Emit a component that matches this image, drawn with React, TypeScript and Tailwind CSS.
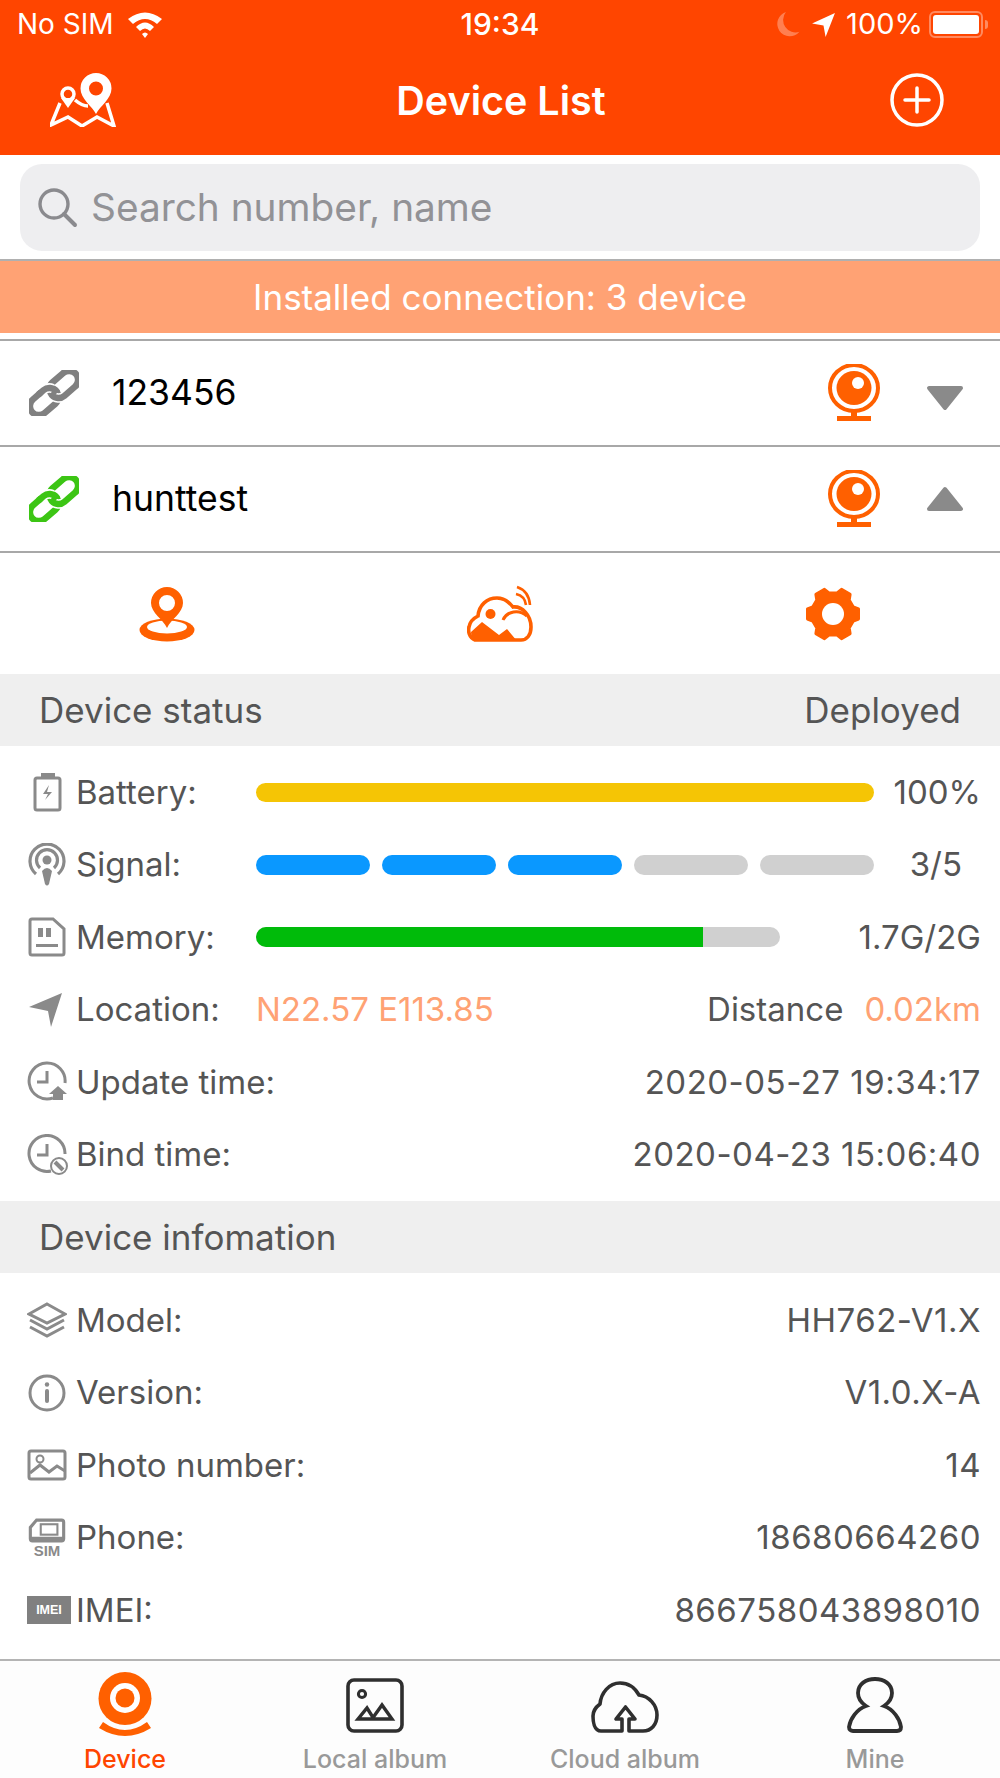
import type { ReactNode } from "react";

const font = { fontFamily: "Inter, 'Liberation Sans', sans-serif" };

const Gray = "#8a8a8a";
const Orange = "#ff6000";

const Svg = ({ w, h, vb, children }: { w: number; h: number; vb: string; children: ReactNode }) => (
  <svg width={w} height={h} viewBox={vb} className="block shrink-0">
    {children}
  </svg>
);

const LinkIcon = ({ color }: { color: string }) => (
  <Svg w={50} h={46} vb="0 0 50 46">
    <g fill="none" strokeWidth="6.5" transform="rotate(-41 25 23)">
      <rect x="-4" y="14" width="32" height="18" rx="9" stroke={color} />
      <rect x="22" y="14" width="32" height="18" rx="9" stroke="#fff" strokeWidth="9.5" />
      <rect x="22" y="14" width="32" height="18" rx="9" stroke={color} />
      <path d="M16 14 H19 A9 9 0 0 1 27 19" stroke="#fff" strokeWidth="9.5" />
      <path d="M12 14 H19 A9 9 0 0 1 28 23 V25" stroke={color} />
    </g>
  </Svg>
);

const Webcam = () => (
  <Svg w={52} h={58} vb="0 0 52 58">
    <ellipse cx="26" cy="24" rx="24" ry="23" fill="none" stroke={Orange} strokeWidth="4" />
    <ellipse cx="26" cy="24" rx="17.5" ry="17" fill={Orange} />
    <circle cx="30" cy="19" r="6" fill="#fff" />
    <rect x="23" y="46" width="6" height="8" fill={Orange} />
    <rect x="9" y="52" width="34" height="5" fill={Orange} />
  </Svg>
);

const DeviceRow = ({ name, color, up }: { name: string; color: string; up?: boolean }) => (
  <div className="flex h-[106px] items-center border-b-2 border-[#a8a8a8] pl-[29px] pr-[36px]">
    <LinkIcon color={color} />
    <span className="ml-[33px] flex-1 text-[35.5px] text-black">{name}</span>
    <Webcam />
    <div className={up ? "ml-[46px]" : "ml-[46px] mt-[10px]"}>
      <Svg w={38} h={26} vb="0 0 38 26">
        <path
          d={up ? "M19 3 L35 23 H3 Z" : "M3 3 H35 L19 23 Z"}
          fill={Gray}
          stroke={Gray}
          strokeWidth="4"
          strokeLinejoin="round"
        />
      </Svg>
    </div>
  </div>
);

const Row = ({ icon, label, children }: { icon: ReactNode; label: string; children?: ReactNode }) => (
  <div className="flex h-[72.5px] items-center pl-[27px] pr-[19px] text-[33px] text-[#555555]">
    <div className="flex w-[49px] shrink-0 items-center">{icon}</div>
    <span className="min-w-[180px]">{label}</span>
    {children}
  </div>
);

const Value = ({ children }: { children: ReactNode }) => <span className="ml-auto tracking-[0.5px]">{children}</span>;

const SectionHead = ({ left, right }: { left: string; right?: string }) => (
  <div className="flex h-[72px] items-center justify-between bg-[#efefef] pl-[39px] pr-[39px] text-[35px] text-[#555555]">
    <span>{left}</span>
    {right && <span>{right}</span>}
  </div>
);

const stroke = { fill: "none", stroke: Gray, strokeWidth: 3 };

const icons = {
  battery: (
    <Svg w={40} h={40} vb="0 0 40 40">
      <rect x="14" y="1" width="14" height="5" fill={Gray} />
      <rect x="8" y="6" width="25" height="32" rx="2" {...stroke} />
      <path d="M22 13 L16 22 H21 L18 28 L25 20 H20 Z" fill={Gray} />
    </Svg>
  ),
  signal: (
    <Svg w={40} h={44} vb="0 0 40 44">
      <path d="M9 31 A17 17 0 1 1 31 31" {...stroke} strokeWidth="3.2" />
      <path d="M13 25 A10.5 10.5 0 1 1 27 25" {...stroke} strokeWidth="3.2" />
      <circle cx="20" cy="17" r="4.5" fill={Gray} />
      <path d="M15 28 Q20 22 25 28 L22 41 Q20 44 18 41 Z" fill={Gray} />
    </Svg>
  ),
  memory: (
    <Svg w={40} h={40} vb="0 0 40 40">
      <path d="M5 2 H26 L37 12 V36 Q37 38 35 38 H5 Q3 38 3 36 V4 Q3 2 5 2 Z" {...stroke} />
      <rect x="11" y="11" width="5" height="9" fill={Gray} />
      <rect x="19" y="11" width="5" height="9" fill={Gray} />
      <rect x="9" y="27" width="22" height="3" fill={Gray} />
    </Svg>
  ),
  location: (
    <Svg w={40} h={36} vb="0 0 40 36">
      <path d="M35 1 L2 15 L21 19 L24 35 Z" fill={Gray} />
    </Svg>
  ),
  update: (
    <Svg w={42} h={42} vb="0 0 42 42">
      <path d="M26 37 A18 18 0 1 1 38 22" {...stroke} />
      <path d="M20 10 V21 H10" {...stroke} />
      <path d="M31 25 L40 33 H36 V39 H26 V33 H22 Z" fill={Gray} />
    </Svg>
  ),
  bind: (
    <Svg w={42} h={42} vb="0 0 42 42">
      <path d="M24 37 A18 18 0 1 1 38 20" {...stroke} />
      <path d="M20 10 V21 H10" {...stroke} />
      <circle cx="32" cy="32" r="8" {...stroke} strokeWidth="2" />
      <path d="M28 28 L36 36" stroke={Gray} strokeWidth="4" />
    </Svg>
  ),
  model: (
    <Svg w={40} h={36} vb="0 0 40 36">
      <path d="M20 2 L38 12 L20 21 L2 12 Z" {...stroke} />
      <path d="M3 18 L20 27 L37 18" {...stroke} />
      <path d="M3 25 L20 34 L37 25" {...stroke} />
    </Svg>
  ),
  version: (
    <Svg w={40} h={38} vb="0 0 40 38">
      <circle cx="20" cy="19" r="17" {...stroke} />
      <circle cx="20" cy="10.5" r="2.2" fill={Gray} />
      <rect x="18" y="15" width="4" height="14" rx="2" fill={Gray} />
    </Svg>
  ),
  photo: (
    <Svg w={40} h={32} vb="0 0 40 32">
      <rect x="2" y="2" width="36" height="28" rx="2" {...stroke} />
      <circle cx="13" cy="10" r="3.5" {...stroke} strokeWidth="2" />
      <path d="M3 24 L13 16 L22 23 L30 17 L38 22" {...stroke} />
    </Svg>
  ),
  phone: (
    <div className="flex w-[40px] flex-col items-center">
      <Svg w={38} h={25} vb="0 0 36 24">
        <path d="M8 2 H32 Q34 2 34 4 V20 Q34 22 32 22 H4 Q2 22 2 20 V9 Z" {...stroke} />
        <rect x="12" y="6" width="16" height="10" {...stroke} strokeWidth="2" />
        <rect x="2" y="18" width="32" height="4" fill={Gray} />
      </Svg>
      <span className="mt-[1px] text-[15px] leading-[13px] font-bold text-[#8a8a8a]" style={{ fontFamily: "'Liberation Sans', sans-serif" }}>
        SIM
      </span>
    </div>
  ),
  imei: (
    <div className="flex h-[28px] w-[44px] items-center justify-center bg-[#808080] text-[12.5px] font-bold text-white" style={{ fontFamily: "'Liberation Sans', sans-serif" }}>
      IMEI
    </div>
  ),
};

// six-tooth gear outline, two teeth on top and two at the bottom
const gearPoints = () => {
  const pts: string[] = [];
  for (let i = 0; i < 6; i++) {
    const a = i * 60;
    [
      [a - 11, 26],
      [a + 11, 26],
      [a + 19, 21.5],
      [a + 41, 21.5],
    ].forEach(([deg, r]) => {
      const rad = (deg * Math.PI) / 180;
      pts.push(`${(28 + r * Math.cos(rad)).toFixed(1)},${(27 + r * Math.sin(rad)).toFixed(1)}`);
    });
  }
  return pts.join(" ");
};

const Tab = ({ icon, label, active }: { icon: ReactNode; label: string; active?: boolean }) => (
  <div className="flex w-[250px] flex-col items-center">
    <div className="flex h-[72px] items-end">{icon}</div>
    <span className={active ? "mt-[11px] text-[25px] leading-[30px] font-medium text-[#ff4500]" : "mt-[11px] text-[25px] leading-[30px] font-medium text-[#999999]"}>{label}</span>
  </div>
);

const dark = { fill: "none", stroke: "#2f2f2f", strokeWidth: 4 };

export default function App() {
  return (
    <div className="h-[1778px] w-[1000px] overflow-hidden bg-white" style={font}>
      {/* status bar + nav */}
      <div className="h-[155px] bg-[#ff4500] text-white">
        <div className="flex h-[48px] items-center justify-between pl-[17px] pr-[12px] text-[28px]">
          <div className="flex w-[300px] items-center gap-[12px]">
            <span>No SIM</span>
            <Svg w={38} h={28} vb="0 0 36 28">
              <path d="M1 9 Q18 -4 35 9 L30 14 Q18 4 6 14 Z" fill="#fff" />
              <path d="M9 17 Q18 8 27 17 L23 21 Q18 16 13 21 Z" fill="#fff" />
              <path d="M15 24 Q18 21 21 24 L18 28 Z" fill="#fff" />
            </Svg>
          </div>
          <span className="mr-[5px] text-[30px] font-medium">19:34</span>
          <div className="flex w-[300px] items-center justify-end gap-[10px]">
            <Svg w={26} h={27} vb="0 0 24 26">
              <path d="M10 1 A12 12 0 1 0 23 20 A12 12 0 0 1 10 1 Z" fill="#ff7f50" />
            </Svg>
            <Svg w={25} h={25} vb="0 0 24 24">
              <path d="M23 1 L1 11 L12 13 L14 24 Z" fill="#fff" />
            </Svg>
            <span className="text-[29px]">100%</span>
            <div className="-ml-[4px] flex items-center gap-[2px]">
              <div className="flex h-[27px] w-[54px] items-center rounded-[6px] border-2 border-[#ff8a60] p-[2px]">
                <div className="h-full w-full rounded-[3px] bg-white" />
              </div>
              <div className="h-[9px] w-[3px] rounded-r-full bg-[#ff8a60]" />
            </div>
          </div>
        </div>
        <div className="flex h-[104px] items-center justify-between pl-[50px] pr-[56px]">
          <Svg w={66} h={54} vb="0 0 66 54">
            <g fill="none" stroke="#fff" strokeWidth="3.5">
              <path d="M10 30 L1 52 L18 44 L32 53 L47 44 L64 53 L57 30" />
              <path d="M25 27 Q32 33 38 33" />
              <circle cx="18" cy="21" r="6" />
            </g>
            <path d="M18 35 L11 25 H25 Z" fill="#fff" />
            <path fillRule="evenodd" d="M46 41 C42 33 30.5 26 30.5 15.5 A15.5 15.5 0 0 1 61.5 15.5 C61.5 26 50 33 46 41 Z M46 8.5 A7 7 0 1 0 46 22.5 A7 7 0 1 0 46 8.5 Z" fill="#fff" />
          </Svg>
          <span className="mr-[4px] mt-[4px] text-[39.5px] font-semibold">Device List</span>
          <Svg w={54} h={54} vb="0 0 54 54">
            <circle cx="27" cy="27" r="25" fill="none" stroke="#fff" strokeWidth="3.5" />
            <path d="M27 15 V39 M15 27 H39" stroke="#fff" strokeWidth="3.5" strokeLinecap="round" />
          </Svg>
        </div>
      </div>

      {/* search */}
      <div className="flex h-[106px] items-center border-b-2 border-[#b0b0b0] px-[20px]">
        <div className="flex h-[87px] w-full items-center rounded-[22px] bg-[#eeeef0] pl-[16px]">
          <Svg w={42} h={42} vb="0 0 42 42">
            <circle cx="18" cy="18" r="14" fill="none" stroke="#8a8a8e" strokeWidth="3.4" />
            <path d="M28 28 L39 39" stroke="#8a8a8e" strokeWidth="4" strokeLinecap="round" />
          </Svg>
          <span className="ml-[13px] text-[38.8px] text-[#929296]">Search number, name</span>
        </div>
      </div>

      <div className="flex h-[72px] items-center justify-center bg-[#ffa274] text-[35px] text-white">
        Installed connection: 3 device
      </div>
      <div className="h-[6px]" />
      <div className="h-[2px] bg-[#a8a8a8]" />

      <DeviceRow name="123456" color="#808080" />
      <DeviceRow name="hunttest" color="#3cc514" up />

      {/* actions */}
      <div className="grid h-[121px] grid-cols-3 items-center">
        <div className="flex justify-center">
          <Svg w={56} h={56} vb="0 0 56 56">
            <ellipse cx="28" cy="44" rx="27.5" ry="11.5" fill={Orange} />
            <ellipse cx="28" cy="41" rx="20" ry="6.5" fill="#fff" />
            <path fillRule="evenodd" d="M28 42 C24 33 12 27 12 17 A16 16 0 0 1 44 17 C44 27 32 33 28 42 Z M28 9 A8 8 0 1 0 28 25 A8 8 0 1 0 28 9 Z" fill={Orange} />
          </Svg>
        </div>
        <div className="flex justify-center">
          <Svg w={66} h={58} vb="0 0 66 58">
            <path d="M8 55 C2 53 1 46 2 42 C3 36 7 33 11 31 C12 20 20 13 30 13 C37 13 42 17 46 22 C55 21 64 30 64 42 C64 50 60 55 54 55 Z" fill="#fff" stroke={Orange} strokeWidth="3.6" />
            <path d="M4 47 L15 37 L32 50 L40 44 L50 56 H8 Q4 53 4 47 Z" fill={Orange} />
            <circle cx="23.5" cy="29" r="5" fill={Orange} />
            <path d="M36 35 C40 26 52 24 60 31" fill="none" stroke={Orange} strokeWidth="3" />
            <path d="M50 2 Q62 6 63 20 M49 9 Q58 11 59 20" fill="none" stroke={Orange} strokeWidth="2.6" />
          </Svg>
        </div>
        <div className="flex justify-center">
          <Svg w={56} h={54} vb="0 0 56 54">
            <polygon points={gearPoints()} fill={Orange} stroke={Orange} strokeWidth="3" strokeLinejoin="round" />
            <circle cx="28" cy="27" r="11" fill="#fff" />
          </Svg>
        </div>
      </div>

      <SectionHead left="Device status" right="Deployed" />
      <div className="h-[10px]" />
      <Row icon={icons.battery} label="Battery:">
        <div className="h-[19px] w-[618px] rounded-full bg-[#f5c505]" />
        <span className="ml-auto">100%</span>
      </Row>
      <Row icon={icons.signal} label="Signal:">
        <div className="flex w-[618px] gap-[12px]">
          <div className="h-[20px] flex-1 rounded-full bg-[#0a98ff]" />
          <div className="h-[20px] flex-1 rounded-full bg-[#0a98ff]" />
          <div className="h-[20px] flex-1 rounded-full bg-[#0a98ff]" />
          <div className="h-[20px] flex-1 rounded-full bg-[#d0d0d0]" />
          <div className="h-[20px] flex-1 rounded-full bg-[#d0d0d0]" />
        </div>
        <span className="ml-auto pr-[19px]">3/5</span>
      </Row>
      <Row icon={icons.memory} label="Memory:">
        <div className="flex h-[20px] w-[524px] overflow-hidden rounded-full bg-[#d0d0d0]">
          <div className="h-full w-[447px] bg-[#00bb0a]" />
        </div>
        <span className="ml-auto">1.7G/2G</span>
      </Row>
      <Row icon={icons.location} label="Location:">
        <span className="text-[#ffa274]">N22.57 E113.85</span>
        <span className="ml-auto">Distance</span>
        <span className="ml-[21px] text-[#ffa274]">0.02km</span>
      </Row>
      <Row icon={icons.update} label="Update time:">
        <Value>2020-05-27 19:34:17</Value>
      </Row>
      <Row icon={icons.bind} label="Bind time:">
        <Value>2020-04-23 15:06:40</Value>
      </Row>
      <div className="h-[10px]" />
      <SectionHead left="Device infomation" />
      <div className="h-[11px]" />
      <Row icon={icons.model} label="Model:">
        <Value>HH762-V1.X</Value>
      </Row>
      <Row icon={icons.version} label="Version:">
        <Value>V1.0.X-A</Value>
      </Row>
      <Row icon={icons.photo} label="Photo number:">
        <Value>14</Value>
      </Row>
      <Row icon={icons.phone} label="Phone:">
        <Value>18680664260</Value>
      </Row>
      <Row icon={icons.imei} label="IMEI:">
        <Value>866758043898010</Value>
      </Row>
      <div className="h-[12px]" />

      {/* tab bar */}
      <div className="flex h-[120px] border-t-2 border-[#b4b4b4] bg-[#fdfdfd]">
        <Tab
          active
          label="Device"
          icon={
            <div className="-mb-[4px]">
              <Svg w={54} h={65} vb="0 0 54 65">
                <circle cx="27" cy="26.5" r="26.5" fill={Orange} />
                <circle cx="27" cy="26" r="15" fill="#fff" />
                <circle cx="27" cy="26" r="9.5" fill={Orange} />
                <path d="M1 56 L5 50 Q27 66 49 50 L53 56 Q27 72 1 56 Z" fill={Orange} />
              </Svg>
            </div>
          }
        />
        <Tab
          label="Local album"
          icon={
            <Svg w={58} h={55} vb="0 0 58 55">
              <rect x="2" y="2" width="54" height="51" rx="6" {...dark} strokeWidth="3.6" />
              <circle cx="16" cy="16" r="3.6" {...dark} strokeWidth="3" />
              <path d="M12 41 L21 30 L28 41 Z M26 41 L36 27 L46 41 Z" {...dark} strokeWidth="3.4" />
            </Svg>
          }
        />
        <Tab
          label="Cloud album"
          icon={
            <Svg w={68} h={52} vb="0 0 68 52">
              <path d="M31 50 H10 C3 50 2 40 2 35 C2 30 5 26 9 23 C10 12 18 2 29 2 C38 2 44 7 48 14 C58 15 66 24 66 34 C66 44 60 50 52 50 H38 V38 H44 L34.5 26 L25 38 H31 Z" {...dark} strokeWidth="3.6" strokeLinejoin="round" />
            </Svg>
          }
        />
        <Tab
          label="Mine"
          icon={
            <Svg w={56} h={56} vb="0 0 56 56">
              <path d="M19 29 C13 25 11 20 11 16 C11 7 19 2 28 2 C37 2 45 7 45 16 C45 20 43 25 37 29 C46 32 53 42 54 50 C54 53 52 54 50 54 H6 C4 54 2 53 2 50 C3 42 10 32 19 29 Z" {...dark} strokeWidth="3.8" />
            </Svg>
          }
        />
      </div>
    </div>
  );
}
